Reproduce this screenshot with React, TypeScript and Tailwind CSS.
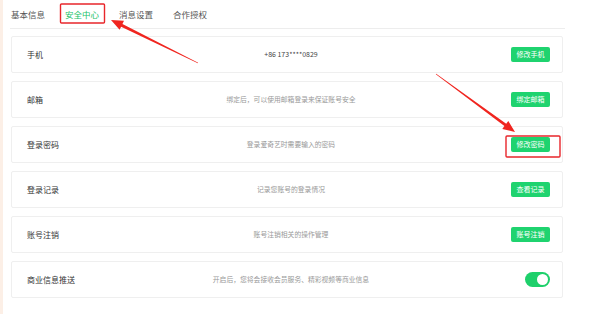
import React from "react";

type Row = { label: string; desc: string; btn?: string; phone?: boolean; toggle?: boolean };

const rows: Row[] = [
  { label: "手机", desc: "+86 173****0829", btn: "修改手机", phone: true },
  { label: "邮箱", desc: "绑定后，可以使用邮箱登录来保证账号安全", btn: "绑定邮箱" },
  { label: "登录密码", desc: "登录爱奇艺时需要输入的密码", btn: "修改密码" },
  { label: "登录记录", desc: "记录您账号的登录情况", btn: "查看记录" },
  { label: "账号注销", desc: "账号注销相关的操作管理", btn: "账号注销" },
  { label: "商业信息推送", desc: "开启后，您将会接收会员服务、精彩视频等商业信息", toggle: true },
];

const tabs = ["基本信息", "安全中心", "消息设置", "合作授权"];

export default function App() {
  return (
    <div
      className="relative w-[600px] h-[314px] bg-white overflow-hidden flex"
      style={{ fontFamily: '"Noto Sans CJK SC", "Noto Sans", sans-serif' }}
    >
      <div className="w-[3px] h-full bg-[#fcefe6]" />
      <div className="ml-[7px] w-[555px] flex flex-col">
        <div className="h-[29px] flex items-center gap-[20px] pl-[1px] border-b border-[#ededed]">
          {tabs.map((t, i) => (
            <span
              key={t}
              className={`text-[8.5px] leading-none ${i === 1 ? "text-[#19c268]" : "text-[#555]"}`}
            >
              {t}
            </span>
          ))}
        </div>
        <div className="mt-[7px] ml-[1px] w-[552px] flex flex-col gap-[8px]">
          {rows.map((r) => (
            <div
              key={r.label}
              className="h-[37px] flex items-center border border-[#efefef] rounded-[2px] pl-[15px] pr-[12px]"
            >
              <div className="w-[80px] text-[8px] text-[#333] leading-none">{r.label}</div>
              <div
                className={`flex-1 text-center leading-none ${
                  r.phone ? "text-[7px] text-[#444]" : "text-[6.8px] text-[#999]"
                }`}
              >
                {r.desc}
              </div>
              <div className="w-[75px] flex justify-end">
                {r.toggle ? (
                  <div className="w-[25px] h-[15px] rounded-full bg-[#1ed06b] flex items-center justify-end pr-[2px]">
                    <div className="w-[11px] h-[11px] rounded-full bg-white" />
                  </div>
                ) : (
                  <div className="w-[39px] h-[15px] rounded-[2px] bg-[#1fd36f] text-white text-[7px] leading-none flex items-center justify-center">
                    {r.btn}
                  </div>
                )}
              </div>
            </div>
          ))}
        </div>
      </div>
      <svg className="absolute inset-0 pointer-events-none" width="600" height="314" viewBox="0 0 600 314">
        <rect x="60.5" y="4" width="44" height="19" fill="none" stroke="#e8262b" strokeWidth="1.4" rx="1" />
        <rect x="506" y="136" width="54" height="21" fill="none" stroke="#e8262b" strokeWidth="1.4" rx="1" />
        <polygon
          points="198.13,62.73 122.46,23.95 124.0,20.8 111,20 119.6,29.8 121.14,26.65 197.87,63.27"
          fill="#f0251f"
        />
        <polygon
          points="435.82,74.24 504.4,126.1 502.3,128.9 515,132 508.3,120.9 506.2,123.7 436.18,73.76"
          fill="#f0251f"
        />
      </svg>
    </div>
  );
}
